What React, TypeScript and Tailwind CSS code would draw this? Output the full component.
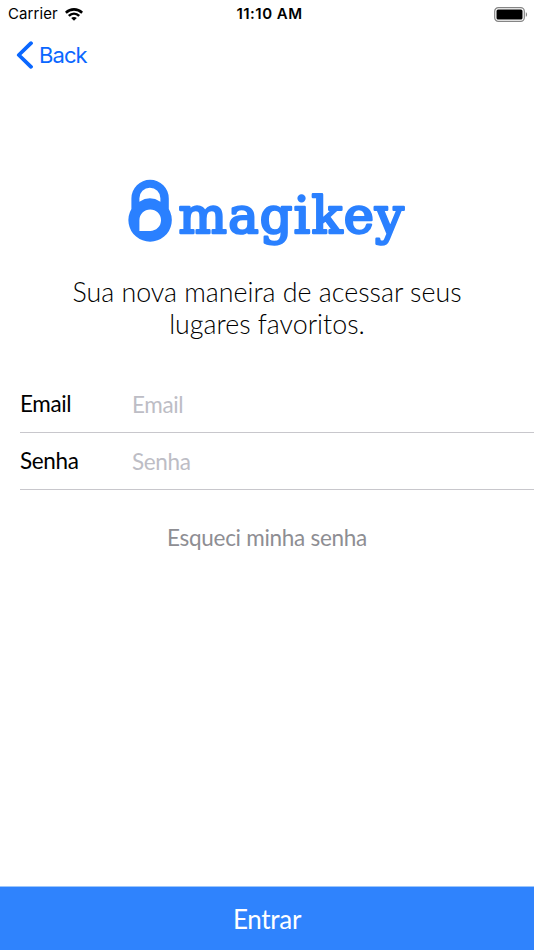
import React, { useState } from 'react';

interface FieldProps {
  label: string;
  type: string;
  value: string;
  onChange: (value: string) => void;
}

const StatusBar: React.FC = () => (
  <div className="grid h-7 grid-cols-3 items-center pl-2 pr-1.5 font-['Inter',sans-serif] text-black">
    <div className="flex items-center gap-[7px]">
      <span className="text-[15px] leading-5 tracking-[0.1px]">Carrier</span>
      <svg width="18" height="13" viewBox="0 0 18 13" fill="none" stroke="currentColor" strokeWidth="2.6">
        <path d="M.8 4.7C5.5.3 12.5.3 17.2 4.7" />
        <path d="M3.8 7.9C6.9 5 11.1 5 14.2 7.9" />
        <path d="M6.2 10C7.8 8.6 10.2 8.6 11.8 10L9 12.8Z" fill="currentColor" stroke="none" />
      </svg>
    </div>
    <span className="pl-[3px] text-center text-[15px] font-semibold leading-5 tracking-[0.5px]">11:10 AM</span>
    <svg className="justify-self-end" width="34" height="15" viewBox="0 0 34 15">
      <rect x="0.7" y="0.7" width="29.6" height="13.6" rx="3.6" fill="none" stroke="#858585" strokeWidth="1.2" />
      <rect x="2.5" y="2.5" width="26" height="10" rx="1.5" />
      <path d="M31.8 5.2C33.5 5.8 33.5 9.2 31.8 9.8Z" fill="#858585" />
    </svg>
  </div>
);

const Logo: React.FC = () => (
  <svg className="mx-auto block overflow-visible" width="278" height="76" viewBox="0 0 278 76" fill="#2a80ff">
    <path
      fillRule="evenodd"
      d="M3.4 30V19.5A18.7 18.7 0 0 1 40.8 19.5V30A21.7 21.7 0 1 1 3.4 30ZM11.4 22.7Q21.9 16 32.4 22.700V19.2A10.5 10.5 0 0 0 11.400 19.2ZM11.4 52V41.2A10.8 10.8 0 1 1 22.2 52Z"
    />
    <text
      x="50.5"
      y="53.6"
      stroke="#2a80ff"
      strokeWidth="2.6"
      strokeLinejoin="round"
      className="font-['DejaVu_Serif',serif] text-[51px] tracking-[1.3px]"
    >
      magikey
    </text>
  </svg>
);

const Field: React.FC<FieldProps> = ({ label, type, value, onChange }) => (
  <label className="ml-5 flex h-[57px] items-center border-b border-[#c8c7cc] text-[22.5px] tracking-[-0.35px]">
    <span className="w-28 shrink-0 text-black">{label}</span>
    <input
      type={type}
      value={value}
      placeholder={label}
      onChange={e => onChange(e.target.value)}
      className="min-w-0 flex-1 bg-transparent pt-0.5 outline-none placeholder:text-[#bdbdc5]"
    />
  </label>
);

const App: React.FC = () => {
  const [email, setEmail] = useState('');
  const [password, setPassword] = useState('');

  return (
    <div className="flex h-[950px] w-full flex-col overflow-hidden bg-white font-['Lato',sans-serif]">
      <StatusBar />

      <nav className="flex h-[54px] items-center pl-4">
        <button className="flex items-center gap-1.5 font-['Inter',sans-serif] text-[22px] tracking-[-0.9px] text-[#0a67ff]">
          <svg width="17" height="28" viewBox="0 0 17 28" fill="none" stroke="currentColor" strokeWidth="3.8" strokeLinecap="round" strokeLinejoin="round">
            <path d="M15 2.2L2.8 14L15 25.8" />
          </svg>
          Back
        </button>
      </nav>

      <main className="flex-1 pt-[97px]">
        <Logo />
        <p className="mx-auto mt-[21px] w-[420px] text-center text-[26.8px] font-light leading-8 text-black">
          Sua nova maneira de acessar seus lugares favoritos.
        </p>

        <form className="mt-9">
          <Field label="Email" type="email" value={email} onChange={setEmail} />
          <Field label="Senha" type="password" value={password} onChange={setPassword} />
        </form>

        <button className="mx-auto mt-8 block text-[22.5px] leading-8 tracking-[-0.28px] text-[#8e8e93]">
          Esqueci minha senha
        </button>
      </main>

      <button className="h-16 shrink-0 border-t border-[#9cc6fb] bg-[#2f83fd] pt-0.5 text-[26px] tracking-[-0.3px] text-white">
        Entrar
      </button>
    </div>
  );
};

export default App;
